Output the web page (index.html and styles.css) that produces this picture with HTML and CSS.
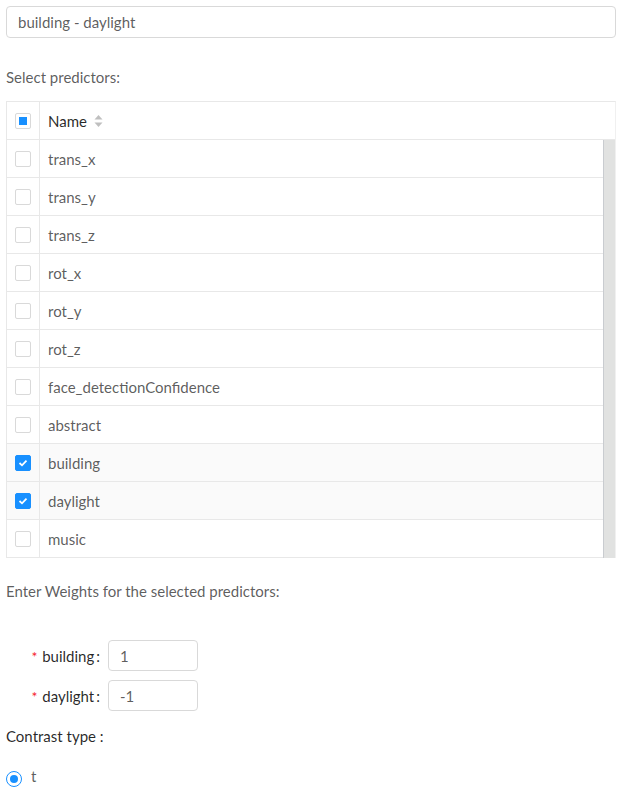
FILE: index.html
```html
<!DOCTYPE html>
<html>
<head>
<meta charset="utf-8">
<link rel="stylesheet" href="styles.css">
</head>
<body>
<div class="page">
  <input class="title-input" type="text" value="building - daylight">
  <div class="section-label">Select predictors:</div>
  <div class="table">
    <div class="thead">
      <div class="cell-check"><span class="cb cb-ind"></span></div>
      <div class="cell-name th-name">Name
        <svg class="sorter" width="9" height="14" viewBox="0 0 9 14"><path d="M4.5 1 L8.5 5.5 L0.5 5.5 Z" fill="#bfbfbf"/><path d="M4.5 13 L8.5 8.5 L0.5 8.5 Z" fill="#bfbfbf"/></svg>
      </div>
    </div>
    <div class="tbody">
      <div class="rows">
        <div class="row"><div class="cell-check"><span class="cb"></span></div><div class="cell-name">trans_x</div></div>
        <div class="row"><div class="cell-check"><span class="cb"></span></div><div class="cell-name">trans_y</div></div>
        <div class="row"><div class="cell-check"><span class="cb"></span></div><div class="cell-name">trans_z</div></div>
        <div class="row"><div class="cell-check"><span class="cb"></span></div><div class="cell-name">rot_x</div></div>
        <div class="row"><div class="cell-check"><span class="cb"></span></div><div class="cell-name">rot_y</div></div>
        <div class="row"><div class="cell-check"><span class="cb"></span></div><div class="cell-name">rot_z</div></div>
        <div class="row"><div class="cell-check"><span class="cb"></span></div><div class="cell-name">face_detectionConfidence</div></div>
        <div class="row"><div class="cell-check"><span class="cb"></span></div><div class="cell-name">abstract</div></div>
        <div class="row selected"><div class="cell-check"><span class="cb cb-on"><svg width="10" height="8" viewBox="0 0 10 8"><path d="M1.5 4 L4 6.3 L8.5 1.6" fill="none" stroke="#fff" stroke-width="1.8"/></svg></span></div><div class="cell-name">building</div></div>
        <div class="row selected"><div class="cell-check"><span class="cb cb-on"><svg width="10" height="8" viewBox="0 0 10 8"><path d="M1.5 4 L4 6.3 L8.5 1.6" fill="none" stroke="#fff" stroke-width="1.8"/></svg></span></div><div class="cell-name">daylight</div></div>
        <div class="row"><div class="cell-check"><span class="cb"></span></div><div class="cell-name">music</div></div>
      </div>
      <div class="scrollbar"></div>
    </div>
  </div>
  <div class="weights-label">Enter Weights for the selected predictors:</div>
  <div class="weights">
    <div class="weight-row"><label class="wlabel"><span class="req">*</span> building<span class="colon">:</span></label><input class="winput" type="text" value="1"></div>
    <div class="weight-row"><label class="wlabel"><span class="req">*</span> daylight<span class="colon">:</span></label><input class="winput" type="text" value="-1"></div>
  </div>
  <div class="contrast-label">Contrast type :</div>
  <div class="radio-row"><span class="radio"><span class="radio-dot"></span></span><span class="radio-text">t</span></div>
</div>
</body>
</html>
```
FILE: styles.css
```css
* { box-sizing: border-box; }
body {
  margin: 0;
  background: #fff;
  font-family: "Source Sans Pro", Lato, "Liberation Sans", sans-serif;
  font-size: 15px;
  color: rgba(0,0,0,0.65);
}
.page { padding: 6px 9px 0 6px; }
.title-input {
  display: block;
  width: 100%;
  height: 32px;
  border: 1px solid #d9d9d9;
  border-radius: 4px;
  padding: 4px 11px;
  font: inherit;
  color: rgba(0,0,0,0.65);
  outline: none;
}
.section-label {
  margin-top: 28px;
  line-height: 22px;
}
.table {
  margin-top: 13px;
  border-top: 1px solid #e8e8e8;
  border-left: 1px solid #e8e8e8;
  border-right: 1px solid #f0f0f0;
}
.thead {
  display: flex;
  height: 38px;
  border-bottom: 1px solid #e8e8e8;
}
.cell-check {
  width: 33px;
  flex: none;
  border-right: 1px solid #e8e8e8;
  display: flex;
  align-items: center;
  justify-content: center;
}
.cell-name {
  flex: 1;
  padding-left: 8px;
  display: flex;
  align-items: center;
  line-height: 20px;
}
.th-name {
  color: rgba(0,0,0,0.85);
  font-weight: 400;
  gap: 7px;
}
.sorter { display: block; margin-top: 1px; }
.tbody { display: flex; }
.rows { flex: 1; }
.row {
  display: flex;
  height: 38px;
  border-bottom: 1px solid #e8e8e8;
}
.row.selected { background: #fafafa; }
.scrollbar {
  width: 12px;
  flex: none;
  background: #e1e2e1;
  border-left: 1px solid #c9ccd0;
}
.cb {
  width: 16px;
  height: 16px;
  border: 1px solid #d9d9d9;
  border-radius: 2px;
  background: #fff;
  display: flex;
  align-items: center;
  justify-content: center;
}
.cb-ind::after {
  content: "";
  width: 8px;
  height: 8px;
  background: #1890ff;
}
.cb-on {
  background: #1890ff;
  border-color: #1890ff;
}
.weights-label {
  margin-top: 22px;
  line-height: 22px;
}
.weights {
  margin-top: 38px;
  display: flex;
  flex-direction: column;
  gap: 9px;
}
.weight-row {
  display: flex;
  align-items: center;
}
.wlabel {
  width: 102px;
  text-align: right;
  padding-right: 8px;
  color: rgba(0,0,0,0.85);
}
.colon { margin-left: 2px; }
.req { color: #f5222d; margin-right: 1px; font-size: 14px; }
.winput {
  width: 90px;
  height: 31px;
  border: 1px solid #d9d9d9;
  border-radius: 4px;
  padding: 4px 11px;
  font: inherit;
  color: rgba(0,0,0,0.65);
  outline: none;
}
.contrast-label {
  margin-top: 14px;
  line-height: 22px;
  color: rgba(0,0,0,0.85);
}
.radio-row {
  margin-top: 24px;
  display: flex;
  align-items: center;
  gap: 9px;
}
.radio {
  width: 16px;
  height: 16px;
  border: 1px solid #1890ff;
  border-radius: 50%;
  display: flex;
  align-items: center;
  justify-content: center;
}
.radio-dot {
  width: 8px;
  height: 8px;
  border-radius: 50%;
  background: #1890ff;
}
.radio-text { margin-top: -6px; }
```
